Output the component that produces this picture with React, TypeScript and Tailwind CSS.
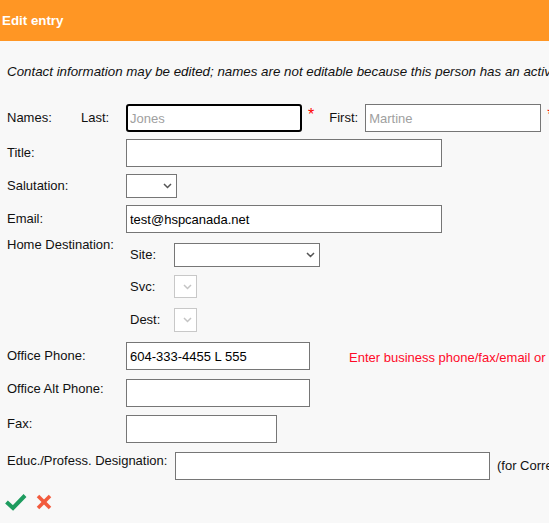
import React from "react";

const inputBase =
  "h-[28px] border border-[#767676] bg-white px-[3px] text-[13px] outline-none";

function SelectBox({ w, h, disabled }: { w: string; h: string; disabled?: boolean }) {
  return (
    <div
      className={`${w} ${h} shrink-0 flex items-center justify-end bg-white border ${
        disabled ? "border-[#c8c8c8]" : "border-[#767676]"
      } pr-[4px]`}
    >
      <svg width="9" height="6" viewBox="0 0 9 6">
        <polyline
          points="1,1 4.5,4.5 8,1"
          fill="none"
          stroke={disabled ? "#c4c4c4" : "#555555"}
          strokeWidth="1.5"
        />
      </svg>
    </div>
  );
}

export default function App() {
  return (
    <div
      className="w-full min-h-[523px] bg-[#f8f8f8] overflow-hidden whitespace-nowrap text-[13px] leading-[16px] text-[#111]"
      style={{ fontFamily: "'Liberation Sans', Arial, sans-serif" }}
    >
      <div className="h-[41px] bg-[#ff9624] flex items-center pl-[2px] text-white font-bold text-[13.33px]">
        Edit entry
      </div>

      <div className="mt-[23px] pl-[7px] italic text-[13.33px]">
        Contact information may be edited; names are not editable because this person has an active
        assignment.
      </div>

      {/* Names */}
      <div className="mt-[24px] pl-[7px] flex items-center h-[28px] *:shrink-0">
        <div className="w-[74px]">Names:</div>
        <div className="w-[45px]">Last:</div>
        <input
          readOnly
          value="Jones"
          className="w-[176px] h-[28px] border-2 border-black rounded-[3px] bg-white px-[2px] text-[13px] text-[#a0a0a0] outline-none"
        />
        <span className="self-start mt-[3px] ml-[6px] text-[16px] leading-[16px] text-[#ff0000]">*</span>
        <div className="ml-[15px] w-[36px]">First:</div>
        <input readOnly value="Martine" className={`${inputBase} w-[176px] text-[#a0a0a0]`} />
        <span className="self-start mt-[3px] ml-[6px] text-[16px] leading-[16px] text-[#ff0000]">*</span>
      </div>

      {/* Title */}
      <div className="mt-[7px] pl-[7px] flex items-center h-[28px] *:shrink-0">
        <div className="w-[119px]">Title:</div>
        <input readOnly value="" className={`${inputBase} w-[316px] text-black`} />
      </div>

      {/* Salutation */}
      <div className="mt-[7px] pl-[7px] flex items-center h-[24px] *:shrink-0">
        <div className="w-[119px]">Salutation:</div>
        <SelectBox w="w-[51px]" h="h-[24px]" />
      </div>

      {/* Email */}
      <div className="mt-[7px] pl-[7px] flex items-center h-[28px] *:shrink-0">
        <div className="w-[119px]">Email:</div>
        <input readOnly value="test@hspcanada.net" className={`${inputBase} w-[316px] text-black`} />
      </div>

      {/* Home destination */}
      <div className="mt-[4px] pl-[7px] flex *:shrink-0">
        <div className="w-[119px]">Home Destination:</div>
        <div className="pt-[6px] pl-[4px] flex flex-col">
          <div className="flex items-center h-[24px] *:shrink-0">
            <div className="w-[44px]">Site:</div>
            <SelectBox w="w-[146px]" h="h-[24px]" />
          </div>
          <div className="mt-[8px] flex items-center h-[23px] *:shrink-0">
            <div className="w-[44px]">Svc:</div>
            <SelectBox w="w-[23px]" h="h-[23px]" disabled />
          </div>
          <div className="mt-[10px] flex items-center h-[24px] *:shrink-0">
            <div className="w-[44px]">Dest:</div>
            <SelectBox w="w-[23px]" h="h-[24px]" disabled />
          </div>
        </div>
      </div>

      {/* Office phone */}
      <div className="mt-[10px] pl-[7px] flex items-center h-[28px] *:shrink-0">
        <div className="w-[119px]">Office Phone:</div>
        <input readOnly value="604-333-4455 L 555" className={`${inputBase} w-[184px] text-black`} />
        <div className="ml-[39px] self-start mt-[8px] text-[#ff0a28]">
          Enter business phone/fax/email or address
        </div>
      </div>

      {/* Office alt phone */}
      <div className="mt-[9px] pl-[7px] flex h-[28px] *:shrink-0">
        <div className="w-[119px] mt-[2px]">Office Alt Phone:</div>
        <input readOnly value="" className={`${inputBase} w-[184px] text-black`} />
      </div>

      {/* Fax */}
      <div className="mt-[8px] pl-[7px] flex h-[28px] *:shrink-0">
        <div className="w-[119px] mt-[1px]">Fax:</div>
        <input readOnly value="" className={`${inputBase} w-[151px] text-black`} />
      </div>

      {/* Educ */}
      <div className="mt-[9px] pl-[7px] flex h-[28px] *:shrink-0">
        <div className="w-[168px] mt-[1px]">Educ./Profess. Designation:</div>
        <input readOnly value="" className={`${inputBase} w-[315px] text-black`} />
        <div className="ml-[7px] mt-[6px]">(for Correspondence)</div>
      </div>

      {/* Actions */}
      <div className="mt-[13px] pl-[4px] flex items-center gap-[9px] *:shrink-0">
        <svg width="23" height="18" viewBox="0 0 23 18">
          <polyline
            points="2.5,9 9,15 21,2.5"
            fill="none"
            stroke="#1e9c5f"
            strokeWidth="4"
            strokeLinecap="butt"
            strokeLinejoin="miter"
          />
        </svg>
        <svg width="16" height="16" viewBox="0 0 16 16">
          <line x1="2" y1="2" x2="14" y2="14" stroke="#f25a3d" strokeWidth="3.6" />
          <line x1="14" y1="2" x2="2" y2="14" stroke="#f25a3d" strokeWidth="3.6" />
        </svg>
      </div>
    </div>
  );
}
